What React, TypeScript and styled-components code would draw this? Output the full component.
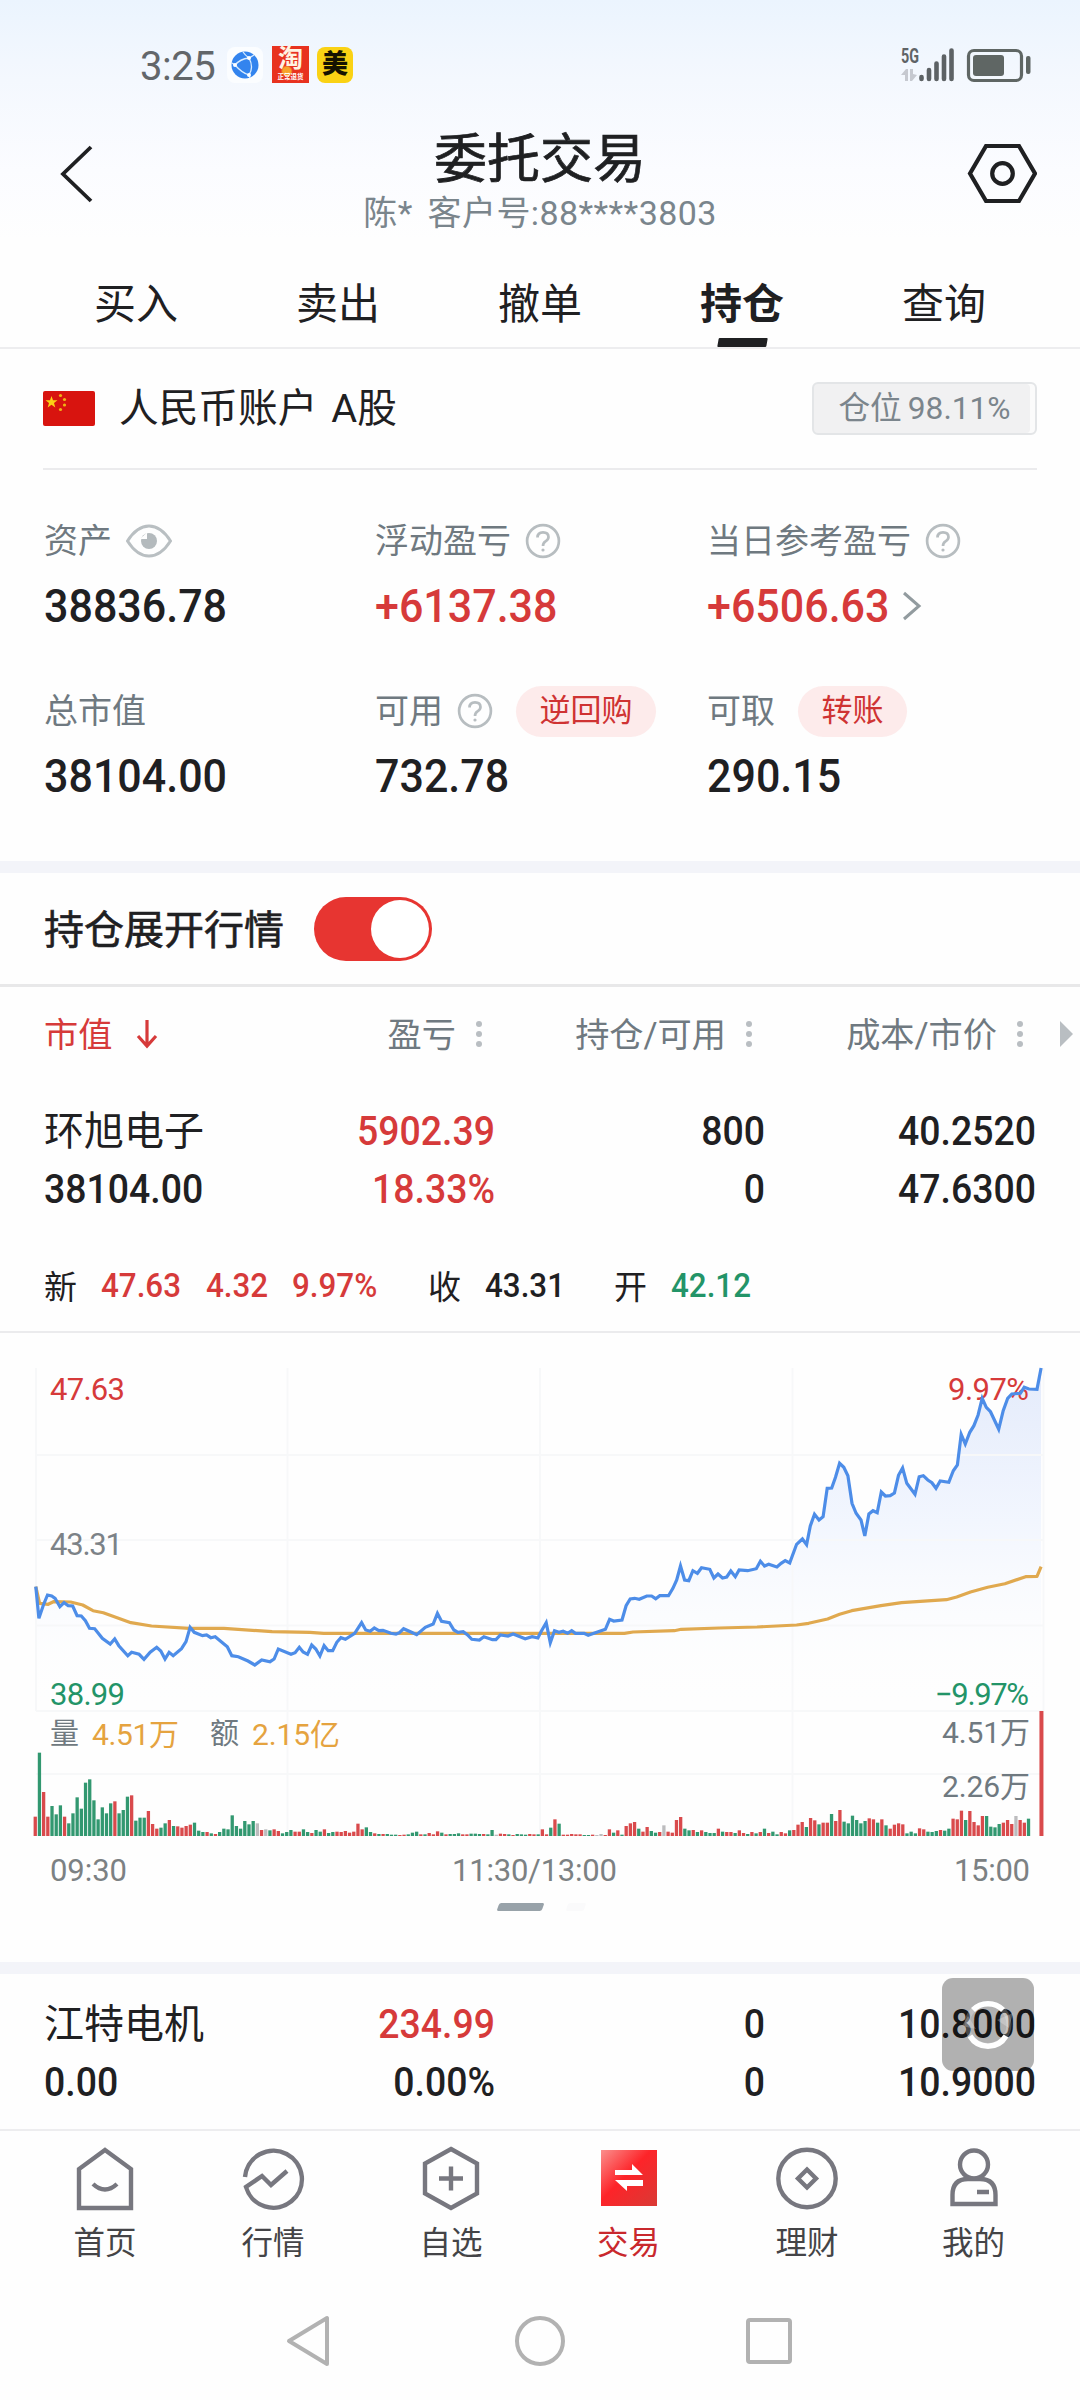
import React from "react";
import styled, { createGlobalStyle } from "styled-components";

const INK = "#1f2022";
const GREY = "#6f7980";
const RED = "#d63a3a";
const GREEN = "#239468";
const ICON = "#77777f";

const GlobalStyle = createGlobalStyle`
  * { box-sizing: border-box; }
  body {
    margin: 0;
    background: #fefefe;
    color: ${INK};
    font-family: Roboto, "Noto Sans CJK SC", sans-serif;
    -webkit-font-smoothing: antialiased;
  }
`;

const Screen = styled.div`
  width: 1080px;
  height: 2400px;
  overflow: hidden;
  display: flex;
  flex-direction: column;
  white-space: nowrap;
  background: linear-gradient(#ebf4fe 0, #f4f8fe 80px, #fbfcff 170px, #fefefe 240px);
`;

/* ---------- status bar ---------- */
const StatusBar = styled.div`
  height: 124px;
  padding: 5px 49px 0 140px;
  display: flex;
  align-items: center;
  justify-content: space-between;
`;
const StatusGroup = styled.div`
  display: flex;
  align-items: center;
`;
const Clock = styled.span`
  width: 87px;
  padding-top: 4px;
  font-size: 40px;
  line-height: 40px;
  color: #62666a;
  letter-spacing: -0.5px;
`;
const TaoIcon = styled.div`
  margin-left: 9px;
  width: 37px;
  height: 37px;
  display: flex;
  flex-direction: column;
  align-items: center;
  background: radial-gradient(circle at 40% 68%, #f7a32b 0 4px, #e8321f 6px);
  color: #fff3e2;
  font-weight: 700;
  font-size: 25px;
  line-height: 26px;
`;
const TaoCaption = styled.span`
  font-size: 6.5px;
  line-height: 11px;
  color: #fff;
`;
const MeiIcon = styled.div`
  margin-left: 8px;
  width: 36px;
  height: 36px;
  border-radius: 8px;
  background: #fad214;
  color: #151200;
  font-weight: 900;
  font-size: 26px;
  line-height: 35px;
  text-align: center;
`;

/* ---------- header ---------- */
const Header = styled.header`
  height: 138px;
  padding: 0 43px 0 57px;
  display: flex;
  justify-content: space-between;
`;
const HeaderSide = styled.div`
  width: 70px;
  padding-top: 16px;
  svg { display: block; }
`;
const TitleBlock = styled.div`
  margin-right: 14px;
  padding-top: 3px;
  display: flex;
  flex-direction: column;
  align-items: center;
`;
const Title = styled.h1`
  margin: 0;
  font-weight: 400;
  font-size: 53px;
  line-height: 66px;
  -webkit-text-stroke: 0.7px ${INK};
`;
const Subtitle = styled.div`
  margin-top: 1px;
  font-size: 34px;
  line-height: 38px;
  color: #7a858c;
  letter-spacing: 0.4px;
  word-spacing: 6px;
`;

const Tabs = styled.nav`
  height: 87px;
  padding: 0 35px;
  display: grid;
  grid-template-columns: repeat(5, 1fr);
  border-bottom: 2px solid #ededef;
`;
const Tab = styled.div<{ $active?: boolean }>`
  display: flex;
  flex-direction: column;
  align-items: center;
  justify-content: flex-end;
  font-size: 42px;
  line-height: 60px;
  font-weight: ${(p) => (p.$active ? 700 : 400)};
`;
const TabMark = styled.div<{ $active?: boolean }>`
  margin-top: 3px;
  width: 49px;
  height: 9px;
  border-radius: 1px;
  transform: skewX(-10deg);
  background: ${(p) => (p.$active ? INK : "transparent")};
`;

/* ---------- account ---------- */
const AccountRow = styled.div`
  margin: 0 43px;
  height: 121px;
  display: flex;
  align-items: center;
  border-bottom: 2px solid #ebebed;
`;
const AccountName = styled.div`
  margin-left: 24px;
  flex: 1;
  font-size: 39.7px;
  line-height: 50px;
  word-spacing: 4px;
`;
const PositionBadge = styled.div`
  width: 225px;
  height: 53px;
  border: 2px solid #e3e5e7;
  border-radius: 6px;
  background: #f1f1f2;
  box-shadow: inset -5px 0 0 #fbfbfb;
  display: flex;
  justify-content: center;
  align-items: center;
  font-size: 31.7px;
  line-height: 40px;
  color: #7b858c;
  gap: 6px;
`;
const Summary = styled.section`
  height: 391px;
  padding: 44px 43px 0 44px;
  display: grid;
  grid-template-columns: 331px 332px 1fr;
  grid-auto-rows: 170px;
`;
const Metric = styled.div`
  display: flex;
  flex-direction: column;
`;
const MetricLabel = styled.div`
  height: 54px;
  display: flex;
  align-items: center;
  font-size: 34px;
  line-height: 50px;
  color: ${GREY};
  svg { margin-left: 14px; }
`;
const Amount = styled.div<{ $up?: boolean }>`
  height: 75px;
  display: flex;
  align-items: center;
  font-size: 46px;
  font-weight: 500;
  color: ${(p) => (p.$up ? RED : INK)};
`;
const Digits = styled.span`
  display: inline-block;
  transform: scaleX(0.935);
  transform-origin: left;
`;
const Pill = styled.span`
  margin-left: 23px;
  padding: 0 23.5px;
  height: 51px;
  border-radius: 26px;
  background: #fdebeb;
  color: #cf3333;
  font-size: 31px;
  line-height: 50px;
`;
const Band = styled.div`
  height: 12px;
  flex: none;
  background: #f3f4f9;
`;

/* ---------- toggle ---------- */
const ToggleRow = styled.div`
  height: 114px;
  padding: 0 44px;
  display: flex;
  align-items: center;
  gap: 30px;
  border-bottom: 3px solid #e8e8e9;
`;
const ToggleLabel = styled.span`
  margin-bottom: 3px;
  font-size: 40px;
  -webkit-text-stroke: 0.6px ${INK};
`;
const Switch = styled.div`
  width: 118px;
  height: 64px;
  padding: 3px;
  border-radius: 32px;
  background: #e73531;
  display: flex;
  justify-content: flex-end;
`;
const Knob = styled.div`
  width: 58px;
  height: 58px;
  border-radius: 50%;
  background: #fff;
`;

/* ---------- holdings table ---------- */
const TableHead = styled.div`
  height: 94px;
  padding: 0 0 5px 44px;
  display: grid;
  grid-template-columns: 270px 181px 270px 271px 44px;
  align-items: center;
  font-size: 34.2px;
  color: ${GREY};
  svg { margin-top: 5px; }
`;
const HeadCell = styled.div<{ $active?: boolean }>`
  display: flex;
  align-items: center;
  justify-content: ${(p) => (p.$active ? "flex-start" : "flex-end")};
  gap: ${(p) => (p.$active ? 24 : 13)}px;
  color: ${(p) => (p.$active ? RED : "inherit")};
`;
const MoreMark = styled.div`
  display: flex;
  justify-content: flex-end;
  padding-right: 7px;
`;
const Holding = styled.div<{ $top: number; $height: number }>`
  height: ${(p) => p.$height}px;
  padding: ${(p) => p.$top}px 44px 0;
  display: grid;
  grid-template-columns: 270px 181px 270px 1fr;
  grid-auto-rows: 58px;
  align-items: center;
`;
const Cell = styled.div<{ $tone?: string; $left?: boolean; $cjk?: boolean }>`
  text-align: ${(p) => (p.$left ? "left" : "right")};
  font-size: 40px;
  line-height: 56px;
  font-weight: ${(p) => (p.$cjk ? 400 : 500)};
  transform: ${(p) => (p.$cjk ? "none" : "scaleX(0.935)")};
  transform-origin: ${(p) => (p.$left ? "left" : "right")};
  color: ${(p) => p.$tone || INK};
`;
const Quote = styled.div`
  height: 94px;
  padding: 0 44px;
  display: flex;
  align-items: center;
  font-size: 33px;
  border-bottom: 2px solid #ebebed;
`;
const QuoteKey = styled.span<{ $w: number }>`
  width: ${(p) => p.$w}px;
`;
const QuoteValue = styled.span<{ $w: number; $tone?: string }>`
  width: ${(p) => p.$w}px;
  font-weight: 500;
  transform: scaleX(0.95);
  transform-origin: left;
  color: ${(p) => p.$tone || INK};
`;

/* ---------- chart ---------- */
const ChartSvg = styled.svg`
  display: block;
  flex: none;
  text {
    font-family: Roboto, "Noto Sans CJK SC", sans-serif;
    font-size: 31px;
  }
`;
const Pager = styled.div`
  height: 67px;
  flex: none;
  padding: 8px 0 0 498px;
  display: flex;
  gap: 24px;
`;
const PagerMark = styled.div<{ $on?: boolean }>`
  width: ${(p) => (p.$on ? 45 : 18)}px;
  height: 8px;
  border-radius: 2px;
  transform: skewX(-20deg);
  background: ${(p) => (p.$on ? "#98a2a9" : "#fafafb")};
`;

/* ---------- bottom ---------- */
const LastHolding = styled.div`
  position: relative;
`;
const FloatButton = styled.div`
  position: absolute;
  left: 942px;
  top: 4px;
  width: 92px;
  height: 93px;
  border-radius: 11px;
  background: rgba(0, 0, 0, 0.3);
`;
const BottomNav = styled.nav`
  height: 150px;
  border-top: 2px solid #ededef;
  padding: 14px 20px 0;
  display: grid;
  grid-template-columns: 170px 166px 190px 165px 192px 141px;
`;
const NavItem = styled.div<{ $active?: boolean }>`
  display: flex;
  flex-direction: column;
  align-items: center;
  gap: 9px;
  font-size: 31.5px;
  line-height: 48px;
  color: ${(p) => (p.$active ? "#c9282d" : "#444447")};
  svg { display: block; }
`;
const SystemNav = styled.div`
  height: 121px;
  display: flex;
  align-items: center;
  padding: 2px 0 0 283px;
  gap: 178px;
`;

const Globe = () => (
  <svg width="36" height="36" viewBox="0 0 36 36">
    <rect width="36" height="36" rx="8" fill="#fbfdff" />
    <circle cx="18" cy="18" r="13.5" fill="#3384ee" />
    <g fill="none" stroke="#d8ecff" strokeWidth="1.3">
      <path d="M16 5 Q18 8 22 11 Q27 20 22 28 Q15 26 8 18 Q13 12 22 11 L27 8 M22 28 L23 31 M8 18 L5 16" />
    </g>
    <g fill="#fff"><circle cx="22" cy="11" r="2" /><circle cx="22" cy="28" r="2" /><circle cx="8" cy="18" r="2" /></g>
  </svg>
);

const SignalBattery = () => (
  <svg width="131" height="42" viewBox="900 44 131 42">
    <text x="901" y="62.500" fontSize="19.500" fontWeight="700" fill="#5f6366" textLength="18" lengthAdjust="spacingAndGlyphs" fontFamily="Roboto">5G</text>
    <path d="M901 75 L906 69 H908 V81 H905 V75 Z M910 69 H913 V74 L917 75 L912 81 H910 Z" fill="#c6c9d0" />
    <path d="M921.5 77 V79 M929 70 V79 M936.5 63.500 V79 M944 56.500 V79 M951.5 50.500 V79" stroke="#5d6265" strokeWidth="4.6" strokeLinecap="round" />
    <rect x="968.5" y="50.500" width="53" height="30" rx="5.500" fill="none" stroke="#5f6664" strokeWidth="3.200" />
    <rect x="973" y="55" width="31" height="21" rx="3" fill="#5f6664" />
    <rect x="1026" y="56" width="4.500" height="18" rx="2" fill="#5f6664" />
  </svg>
);

const Flag = () => (
  <svg width="52" height="35" viewBox="0 0 52 35">
    <rect width="52" height="35" rx="2" fill="#d8140f" />
    <path d="M8.500 5 L10 9.300 L14.500 9.300 L11 12 L12.300 16.400 L8.500 13.700 L4.700 16.400 L6 12 L2.500 9.300 L7 9.300 Z" fill="#fbd115" />
    <g fill="#f0b414">
      <circle cx="17.500" cy="4.500" r="1.600" />
      <circle cx="21.500" cy="8.500" r="1.600" />
      <circle cx="21.500" cy="14" r="1.600" />
      <circle cx="17.500" cy="18.500" r="1.600" />
    </g>
  </svg>
);

const Eye = () => (
  <svg width="46" height="34" viewBox="0 0 46 34">
    <path d="M1.500 17 Q11 2 23 2 T44.500 17 Q35 32 23 32 T1.500 17 Z" fill="none" stroke="#b9bfc2" strokeWidth="3" />
    <circle cx="23" cy="17" r="8" fill="#b4babd" />
    <path d="M21 8.500 V15 H14 Z" fill="#fefefe" />
  </svg>
);

const Help = () => (
  <svg width="36" height="36" viewBox="0 0 36 36" fill="none" stroke="#b7bdc0" strokeWidth="2.700">
    <circle cx="18" cy="18" r="15.900" />
    <path d="M12.500 14.500 Q12.500 9.300 18 9.300 T23.500 14 Q23.500 16.500 20.500 18.300 Q18 19.800 18 23" />
    <circle cx="18" cy="27" r="0.900" fill="#b7bdc0" strokeWidth="1.400" />
  </svg>
);

const Dots = () => (
  <svg width="26" height="30" viewBox="0 0 26 30" fill="#b9bec2">
    <circle cx="10" cy="5" r="3" />
    <circle cx="10" cy="15" r="3" />
    <circle cx="10" cy="25" r="3" />
  </svg>
);

/* Intraday series, in plot units: 2.9037 per px across, 3 per px down. */
const PRICE_AM = "104,740 113,835 126,795 138,765 150,768 160,775 174,800 186,788 198,797 211,798 224,827 236,828 248,842 260,865 275,866 297,895 320,912 333,897 345,917 371,947 382,937 404,943 418,958 436,937 455,922 467,933 479,957 491,937 503,947 527,926 540,905 552,862 564,877 588,887 600,885 612,893 625,890 660,920 673,947 692,950 720,963 740,975 760,960 784,965 796,957 808,927 845,943 857,938 869,922 880,936 893,943 905,915 917,927 929,948 941,917 953,932 966,932 978,907 990,893 1003,898 1030,880 1050,848 1062,870 1075,874 1087,864 1100,872 1112,871 1135,880 1150,882 1160,878 1172,866 1195,877 1210,884 1235,862 1258,852 1270,820 1282,844 1305,848 1318,870 1330,877 1345,875 1357,884 1370,898 1392,900 1405,890 1430,899 1440,899 1453,885 1475,888 1490,882 1525,896 1545,890 1562,894";
const PRICE_PM = "3,875 18,848 30,908 42,872 55,877 67,874 80,880 92,872 103,880 128,880 140,886 165,877 190,868 202,838 214,843 238,840 250,797 262,777 275,775 288,778 310,768 324,768 336,776 348,767 373,767 386,745 397,720 408,678 420,720 432,722 444,692 457,700 469,683 493,688 505,714 517,702 530,714 542,711 554,693 567,710 578,690 603,692 628,686 640,664 652,678 664,673 688,681 700,670 712,662 725,669 745,613 762,597 774,614 785,558 797,523 810,540 822,530 834,445 847,444 858,412 870,370 882,382 894,407 906,490 918,520 932,540 943,588 955,522 967,512 979,518 991,456 1003,468 1017,467 1029,459 1041,406 1053,384 1065,430 1089,463 1101,410 1113,407 1126,420 1138,428 1150,445 1162,423 1187,427 1200,392 1212,375 1223,283 1235,312 1248,277 1260,257 1272,225 1284,175 1296,202 1308,215 1332,268 1345,212 1358,175 1370,162 1395,160 1406,142 1420,147 1443,148 1455,84";
const AVG_AM = "104,740 115,790 140,793 155,785 205,786 240,795 270,812 300,818 380,848 440,858 550,865 650,865 790,875 900,877 940,880 1560,880";
const AVG_PM = "0,880 245,880 270,876 390,872 410,868 520,864 630,861 745,855 780,850 835,837 870,823 905,812 990,797 1050,788 1180,779 1210,771 1250,756 1300,742 1350,731 1410,710 1443,709 1455,680";

const toPoints = (src: string, shift: number) =>
  src
    .split(" ")
    .map((pair) => {
      const [x, y] = pair.split(",").map(Number);
      return `${((x + shift) / 2.9037).toFixed(1)},${(y / 3).toFixed(1)}`;
    })
    .join(" ");

const PRICE = toPoints(PRICE_AM, 0) + " " + toPoints(PRICE_PM, 1568);
const AVERAGE = toPoints(AVG_AM, 0) + " " + toPoints(AVG_PM, 1568);

/* One entry per trading minute: direction (r up, g down, x flat) and volume. */
const VOLUME =
  "r58 g250 r132 r58 g90 g65 g92 r58 g38 g68 g116 g82 g160 g170 g107 g50 g86 g68 g98 r104 g68 g78 g118 r122 g46 g55 g55 r75 r36 r22 g25 g38 r48 g30 r29 r25 r30 r34 g40 g16 g12 r12 g8 r6 g12 g22 g20 g62 g30 g22 g45 g35 g45 x38 r18 x20 g17 r20 r15 g8 g12 g18 r13 r13 g20 g12 r9 g18 g13 r20 g9 g12 r13 r12 r15 r10 r13 r37 r20 g26 g12 r8 g6 r6 g6 g4 g4 r3 r4 g5 g10 g13 r5 g5 r9 r5 r14 g10 r5 g6 g6 g8 r5 r5 g7 g7 g6 r6 g5 g18 x4 r7 r6 g5 r3 g6 g5 g4 r6 r5 g5 r20 r5 g25 r50 g37 r4 r4 r6 r5 r5 g3 g3 r4 x3 x6 r3 r20 g10 r17 g4 r30 r38 r42 g22 r13 r27 g15 g10 r12 x32 r13 r10 r48 r57 g22 g17 r18 g12 r17 g12 g9 g9 r22 g13 r12 r12 g9 r17 r9 g6 r12 g8 r12 g22 r9 g13 g5 r12 r8 g17 r18 r34 r42 g27 r54 r47 g35 r40 r40 g66 r45 r78 g43 g38 g61 g48 g38 g45 r53 r50 g40 r50 g32 r22 r34 r38 r35 g8 g13 g8 r23 r20 g13 g12 g15 r18 g16 g22 r52 r50 r76 g48 r75 r42 r32 r60 g60 g28 g26 g36 r40 r48 r36 x60 r48 r40 g52 x0 x0 r375";
const BAR_COLORS: Record<string, string> = { r: "#d94a4c", g: "#329870", x: "#bcbcbe" };

const Chart = () => (
  <ChartSvg width="1080" height="562" viewBox="0 -7 1080 562">
    <defs>
      <linearGradient id="area" x1="0" y1="28" x2="0" y2="370" gradientUnits="userSpaceOnUse">
        <stop offset="0" stopColor="#e4ebfb" />
        <stop offset="0.45" stopColor="#f2f6fe" />
        <stop offset="1" stopColor="#fefefe" stopOpacity="0" />
      </linearGradient>
    </defs>
    <polygon points={`${PRICE} 1041,370 36,370`} fill="url(#area)" />
    <path
      d="M36 115 H1043 M36 200 H1043 M36 285.500 H1043 M36 371 H1043 M36 434 H1043 M36 28 V371 M287.500 28 V496 M540 28 V496 M792.500 28 V496 M1043.500 28 V371"
      stroke="#f7f8f9"
      strokeWidth="2"
      fill="none"
    />
    <g fill={GREY}>
      <text x="50" y="60" fill={RED} textLength="75">47.63</text>
      <text x="50" y="215" fill="#7c8287" textLength="73">43.31</text>
      <text x="50" y="365" fill={GREEN} textLength="75">38.99</text>
      <text x="1029" y="60" fill={RED} textAnchor="end" textLength="81">9.97%</text>
      <text x="1029" y="365" fill={GREEN} textAnchor="end" textLength="94">−9.97%</text>
      <text x="50" y="404" style={{ fontSize: 29 }}>量</text>
      <text x="92" y="405" fill="#e5a33f" style={{ fontSize: 30 }} textLength="87">4.51万</text>
      <text x="210" y="404" style={{ fontSize: 29 }}>额</text>
      <text x="252" y="405" fill="#e5a33f" style={{ fontSize: 30 }} textLength="88">2.15亿</text>
      <text x="1030" y="403" textAnchor="end" textLength="88" style={{ fontSize: 30 }}>4.51万</text>
      <text x="1030" y="457" textAnchor="end" textLength="88" style={{ fontSize: 30 }}>2.26万</text>
      <g fill="#7c8183">
        <text x="50" y="541" textLength="77">09:30</text>
        <text x="452" y="541" textLength="165">11:30/13:00</text>
        <text x="1030" y="541" textAnchor="end" textLength="76">15:00</text>
      </g>
    </g>
    <polyline points={AVERAGE} fill="none" stroke="#e0a94f" strokeWidth="3.200" strokeLinejoin="round" />
    <polyline points={PRICE} fill="none" stroke="#4d8de8" strokeWidth="3.200" strokeLinejoin="miter" />
    {VOLUME.split(" ").map((bar, i) => {
      const h = Number(bar.slice(1)) / 3;
      return (
        <rect key={i} x={33.6 + i * 4.191} y={496 - h} width={i === 240 ? 4 : 3.3} height={h} fill={BAR_COLORS[bar[0]]} />
      );
    })}
  </ChartSvg>
);

const navIcon = { width: 66, height: 66, viewBox: "0 0 66 66", fill: "none", stroke: ICON, strokeWidth: 4.4 };

const App = () => (
  <Screen>
    <GlobalStyle />
    <StatusBar>
      <StatusGroup>
        <Clock>3:25</Clock>
        <Globe />
        <TaoIcon>淘<TaoCaption>正常退货</TaoCaption></TaoIcon>
        <MeiIcon>美</MeiIcon>
      </StatusGroup>
      <SignalBattery />
    </StatusBar>

    <Header>
      <HeaderSide>
        <svg width="40" height="68" viewBox="0 0 40 68" fill="none" stroke={INK} strokeWidth="3.800">
          <path d="M34 7 L6 34 L34 61" />
        </svg>
      </HeaderSide>
      <TitleBlock>
        <Title>委托交易</Title>
        <Subtitle>陈* 客户号:88****3803</Subtitle>
      </TitleBlock>
      <HeaderSide>
        <svg width="70" height="68" viewBox="0 0 70 68" fill="none" stroke={INK} strokeWidth="4.200">
          <path d="M19 6 H52 L68 33.500 L52 61 H19 L3 33.500 Z" />
          <circle cx="35.500" cy="33.500" r="10.300" />
        </svg>
      </HeaderSide>
    </Header>

    <Tabs>
      {["买入", "卖出", "撤单", "持仓", "查询"].map((t) => (
        <Tab key={t} $active={t === "持仓"}>
          {t}
          <TabMark $active={t === "持仓"} />
        </Tab>
      ))}
    </Tabs>

    <AccountRow>
      <Flag />
      <AccountName>人民币账户 A股</AccountName>
      <PositionBadge><span>仓位</span><span>98.11%</span></PositionBadge>
    </AccountRow>

    <Summary>
      <Metric>
        <MetricLabel>资产<Eye /></MetricLabel>
        <Amount><Digits>38836.78</Digits></Amount>
      </Metric>
      <Metric>
        <MetricLabel>浮动盈亏<Help /></MetricLabel>
        <Amount $up><Digits>+6137.38</Digits></Amount>
      </Metric>
      <Metric>
        <MetricLabel>当日参考盈亏<Help /></MetricLabel>
        <Amount $up>
          <Digits>+6506.63</Digits>
          <svg width="20" height="30" viewBox="0 0 20 30" fill="none" stroke="#929b9f" strokeWidth="3">
            <path d="M2 2 L17 15 L2 28" />
          </svg>
        </Amount>
      </Metric>
      <Metric>
        <MetricLabel>总市值</MetricLabel>
        <Amount><Digits>38104.00</Digits></Amount>
      </Metric>
      <Metric>
        <MetricLabel>可用<Help /><Pill>逆回购</Pill></MetricLabel>
        <Amount><Digits>732.78</Digits></Amount>
      </Metric>
      <Metric>
        <MetricLabel>可取<Pill>转账</Pill></MetricLabel>
        <Amount><Digits>290.15</Digits></Amount>
      </Metric>
    </Summary>
    <Band />

    <ToggleRow>
      <ToggleLabel>持仓展开行情</ToggleLabel>
      <Switch><Knob /></Switch>
    </ToggleRow>

    <TableHead>
      <HeadCell $active>
        市值
        <svg width="22" height="30" viewBox="0 0 22 30" fill="none" stroke={RED} strokeWidth="3.200">
          <path d="M11 1 V27 M2 17 L11 27 L20 17" />
        </svg>
      </HeadCell>
      <HeadCell>盈亏<Dots /></HeadCell>
      <HeadCell>持仓/可用<Dots /></HeadCell>
      <HeadCell>成本/市价<Dots /></HeadCell>
      <MoreMark>
        <svg width="13" height="26" viewBox="0 0 13 26" fill="#b9bec2"><path d="M0 0 L13 13 L0 26 Z" /></svg>
      </MoreMark>
    </TableHead>

    <Holding $top={22} $height={158}>
      <Cell $left $cjk>环旭电子</Cell>
      <Cell $tone={RED}>5902.39</Cell>
      <Cell>800</Cell>
      <Cell>40.2520</Cell>
      <Cell $left>38104.00</Cell>
      <Cell $tone={RED}>18.33%</Cell>
      <Cell>0</Cell>
      <Cell>47.6300</Cell>
    </Holding>

    <Quote>
      <QuoteKey $w={57}>新</QuoteKey>
      <QuoteValue $w={105} $tone={RED}>47.63</QuoteValue>
      <QuoteValue $w={86} $tone={RED}>4.32</QuoteValue>
      <QuoteValue $w={136} $tone={RED}>9.97%</QuoteValue>
      <QuoteKey $w={57}>收</QuoteKey>
      <QuoteValue $w={129}>43.31</QuoteValue>
      <QuoteKey $w={57}>开</QuoteKey>
      <QuoteValue $w={90} $tone={GREEN}>42.12</QuoteValue>
    </Quote>

    <Chart />
    <Pager><PagerMark $on /><PagerMark /></Pager>
    <Band />

    <LastHolding>
      <Holding $top={22} $height={155}>
        <Cell $left $cjk>江特电机</Cell>
        <Cell $tone={RED}>234.99</Cell>
        <Cell>0</Cell>
        <Cell>10.8000</Cell>
        <Cell $left>0.00</Cell>
        <Cell>0.00%</Cell>
        <Cell>0</Cell>
        <Cell>10.9000</Cell>
      </Holding>
      <FloatButton>
        <svg width="92" height="93" viewBox="0 0 92 93" fill="none">
          <circle cx="46" cy="46.500" r="21" stroke="#fff" strokeOpacity="0.220" strokeWidth="5" />
          <path d="M31 32 A21 21 0 0 1 61 32" stroke="#fff" strokeWidth="5.500" />
          <path d="M28 58 A21 21 0 0 0 64 58" stroke="#fff" strokeWidth="5.500" />
          <path d="M55 42 L71 35 L67 50 Z M20 48 L26 38 L34 51 Z" fill="#fff" fillOpacity="0.250" />
        </svg>
      </FloatButton>
    </LastHolding>

    <BottomNav>
      <NavItem>
        <svg {...navIcon}><path d="M33 5 L59 24 V63 H7 V24 Z M21 39 Q33 50 45 39" /></svg>
        首页
      </NavItem>
      <NavItem>
        <svg {...navIcon}><path d="M5 32 A28.500 28.500 0 1 1 6 42 L22 31 L31 40 L47 26" /></svg>
        行情
      </NavItem>
      <NavItem>
        <svg {...navIcon}><path d="M33 4 L59 18.500 V48.500 L33 63 L7 48.500 V18.500 Z M33 21.500 V45.500 M21 33.500 H45" /></svg>
        自选
      </NavItem>
      <NavItem $active>
        <svg width="66" height="66" viewBox="0 0 66 66">
          <defs>
            <linearGradient id="trade" x1="0" y1="0" x2="1" y2="1">
              <stop offset="0" stopColor="#fb8f8d" />
              <stop offset="0.45" stopColor="#fd2429" />
              <stop offset="1" stopColor="#d93a35" />
            </linearGradient>
          </defs>
          <rect x="5" y="5" width="56" height="56" fill="url(#trade)" />
          <path d="M19 25 H36 V19 L47 30 H19 Z M47 41 H31 V46 L19 35 H47 Z" fill="#fff" />
        </svg>
        交易
      </NavItem>
      <NavItem>
        <svg {...navIcon}><circle cx="33" cy="33.500" r="28.700" /><path d="M33 24.500 L42 33.500 L33 42.500 L24 33.500 Z" /></svg>
        理财
      </NavItem>
      <NavItem>
        <svg {...navIcon}><circle cx="33" cy="19.500" r="14" /><path d="M11.500 59 V50 Q11.500 34 27 34 H39 Q54.500 34 54.500 50 V59 Z M36 47 H48" /></svg>
        我的
      </NavItem>
    </BottomNav>

    <SystemNav>
      <svg width="52" height="56" viewBox="0 0 52 56" fill="none" stroke="#b2b2b2" strokeWidth="4" strokeLinejoin="round">
        <path d="M44 5 V51 L6 28 Z" />
      </svg>
      <svg width="54" height="56" viewBox="0 0 54 56" fill="none" stroke="#b2b2b2" strokeWidth="4">
        <circle cx="27" cy="28" r="23" />
      </svg>
      <svg width="50" height="56" viewBox="0 0 50 56" fill="none" stroke="#b2b2b2" strokeWidth="4">
        <rect x="3" y="7" width="42" height="42" rx="2" />
      </svg>
    </SystemNav>
  </Screen>
);

export default App;
